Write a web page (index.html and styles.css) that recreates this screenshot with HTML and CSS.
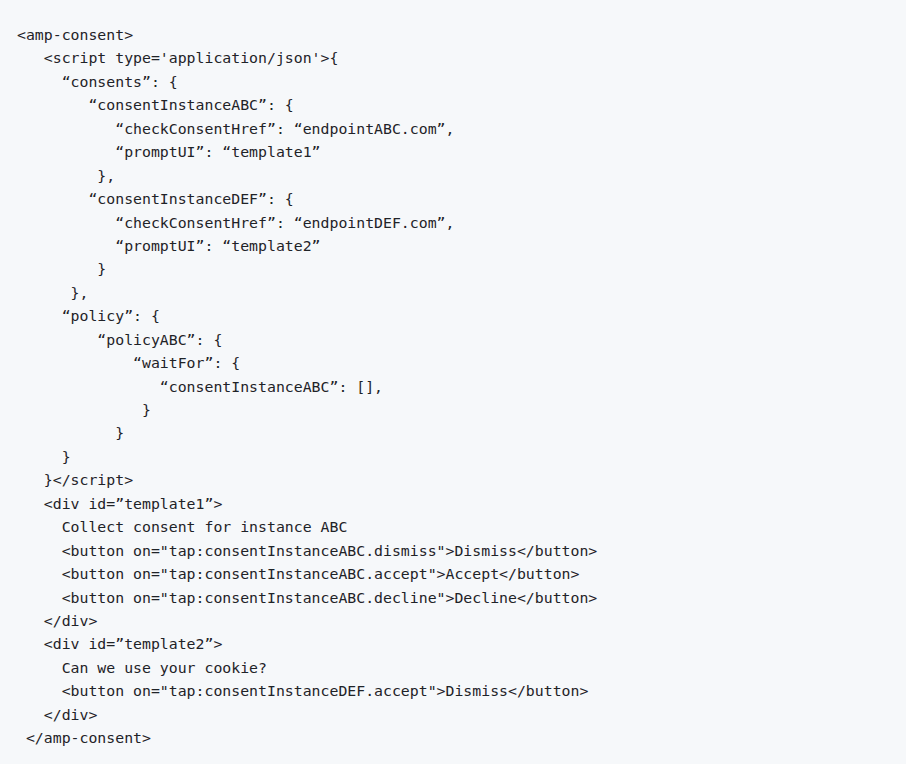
FILE: index.html
```
<!DOCTYPE html>
<html lang="en">
<head>
<meta charset="utf-8">
<title>amp-consent example</title>
<link rel="stylesheet" href="styles.css">
</head>
<body>
<div class="code-block"><pre class="code">&lt;amp-consent&gt;
   &lt;script type='application/json'&gt;{
     “consents”: {
        “consentInstanceABC”: {
           “checkConsentHref”: “endpointABC.com”,
           “promptUI”: “template1”
         },
        “consentInstanceDEF”: {
           “checkConsentHref”: “endpointDEF.com”,
           “promptUI”: “template2”
         }
      },
     “policy”: {
         “policyABC”: {
             “waitFor”: {
                “consentInstanceABC”: [],
              }
           }
     }
   }&lt;/script&gt;
   &lt;div id=”template1”&gt;
     Collect consent for instance ABC
     &lt;button on="tap:consentInstanceABC.dismiss"&gt;Dismiss&lt;/button&gt;
     &lt;button on="tap:consentInstanceABC.accept"&gt;Accept&lt;/button&gt;
     &lt;button on="tap:consentInstanceABC.decline"&gt;Decline&lt;/button&gt;
   &lt;/div&gt;
   &lt;div id=”template2”&gt;
     Can we use your cookie?
     &lt;button on="tap:consentInstanceDEF.accept"&gt;Dismiss&lt;/button&gt;
   &lt;/div&gt;
 &lt;/amp-consent&gt;</pre></div>
</body>
</html>
```

FILE: styles.css
```
html, body {
  margin: 0;
  padding: 0;
  background: #f6f8fa;
}

.code-block {
  background: #f6f8fa;
  min-height: 764px;
  box-sizing: border-box;
  padding: 23px 16px 16px 17px;
}

.code {
  margin: 0;
  font-family: "DejaVu Sans Mono", "Liberation Mono", monospace;
  font-size: 14.84px;
  line-height: 23.44px;
  color: #1f2328;
  white-space: pre;
}
```
